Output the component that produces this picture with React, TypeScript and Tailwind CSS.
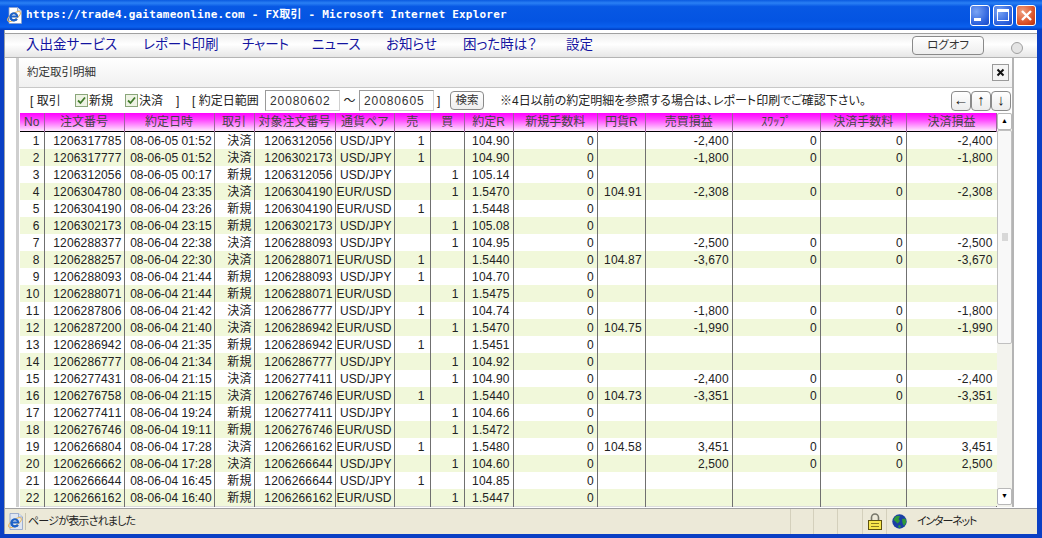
const sans = 'font-["Liberation_Sans","Noto_Sans_CJK_JP",sans-serif]';

type Row = [string, string, string, string, string, string, string, string, string, string, string, string, string];

// order, date, kind, target, pair, sell, buy, rate, yen rate, p/l, swap, fee, total
const rows: Row[] = [
  ['1206317785', '08-06-05 01:52', '決済', '1206312056', 'USD/JPY', '1', '', '104.90', '', '-2,400', '0', '0', '-2,400'],
  ['1206317777', '08-06-05 01:52', '決済', '1206302173', 'USD/JPY', '1', '', '104.90', '', '-1,800', '0', '0', '-1,800'],
  ['1206312056', '08-06-05 00:17', '新規', '1206312056', 'USD/JPY', '', '1', '105.14', '', '', '', '', ''],
  ['1206304780', '08-06-04 23:35', '決済', '1206304190', 'EUR/USD', '', '1', '1.5470', '104.91', '-2,308', '0', '0', '-2,308'],
  ['1206304190', '08-06-04 23:26', '新規', '1206304190', 'EUR/USD', '1', '', '1.5448', '', '', '', '', ''],
  ['1206302173', '08-06-04 23:15', '新規', '1206302173', 'USD/JPY', '', '1', '105.08', '', '', '', '', ''],
  ['1206288377', '08-06-04 22:38', '決済', '1206288093', 'USD/JPY', '', '1', '104.95', '', '-2,500', '0', '0', '-2,500'],
  ['1206288257', '08-06-04 22:30', '決済', '1206288071', 'EUR/USD', '1', '', '1.5440', '104.87', '-3,670', '0', '0', '-3,670'],
  ['1206288093', '08-06-04 21:44', '新規', '1206288093', 'USD/JPY', '1', '', '104.70', '', '', '', '', ''],
  ['1206288071', '08-06-04 21:44', '新規', '1206288071', 'EUR/USD', '', '1', '1.5475', '', '', '', '', ''],
  ['1206287806', '08-06-04 21:42', '決済', '1206286777', 'USD/JPY', '1', '', '104.74', '', '-1,800', '0', '0', '-1,800'],
  ['1206287200', '08-06-04 21:40', '決済', '1206286942', 'EUR/USD', '', '1', '1.5470', '104.75', '-1,990', '0', '0', '-1,990'],
  ['1206286942', '08-06-04 21:35', '新規', '1206286942', 'EUR/USD', '1', '', '1.5451', '', '', '', '', ''],
  ['1206286777', '08-06-04 21:34', '新規', '1206286777', 'USD/JPY', '', '1', '104.92', '', '', '', '', ''],
  ['1206277431', '08-06-04 21:15', '決済', '1206277411', 'USD/JPY', '', '1', '104.90', '', '-2,400', '0', '0', '-2,400'],
  ['1206276758', '08-06-04 21:15', '決済', '1206276746', 'EUR/USD', '1', '', '1.5440', '104.73', '-3,351', '0', '0', '-3,351'],
  ['1206277411', '08-06-04 19:24', '新規', '1206277411', 'USD/JPY', '', '1', '104.66', '', '', '', '', ''],
  ['1206276746', '08-06-04 19:11', '新規', '1206276746', 'EUR/USD', '', '1', '1.5472', '', '', '', '', ''],
  ['1206266804', '08-06-04 17:28', '決済', '1206266162', 'EUR/USD', '1', '', '1.5480', '104.58', '3,451', '0', '0', '3,451'],
  ['1206266662', '08-06-04 17:28', '決済', '1206266644', 'USD/JPY', '', '1', '104.60', '', '2,500', '0', '0', '2,500'],
  ['1206266644', '08-06-04 16:45', '新規', '1206266644', 'USD/JPY', '1', '', '104.85', '', '', '', '', ''],
  ['1206266162', '08-06-04 16:40', '新規', '1206266162', 'EUR/USD', '', '1', '1.5447', '', '', '', '', ''],
];

const columns = [
  { label: 'No', width: 'w-[24px]' },
  { label: '注文番号', width: 'w-[80px]' },
  { label: '約定日時', width: 'w-[90px]' },
  { label: '取引', width: 'w-[40px]' },
  { label: '対象注文番号', width: 'w-[81px]' },
  { label: '通貨ペア', width: 'w-[59px]' },
  { label: '売', width: 'w-[36px]' },
  { label: '買', width: 'w-[34px]' },
  { label: '約定R', width: 'w-[49px]' },
  { label: '新規手数料', width: 'w-[84px]' },
  { label: '円貨R', width: 'w-[48px]' },
  { label: '売買損益', width: 'w-[87px]' },
  { label: 'ｽﾜｯﾌﾟ', width: 'w-[88px]' },
  { label: '決済手数料', width: 'w-[86px]' },
  { label: '決済損益', width: 'w-[90px]' },
];

const PageIcon = ({ page = '#ffffff' }: { page?: string }) => (
  <svg width="17" height="17" viewBox="0 0 17 17" className="shrink-0">
    <path d="M3 .5h8.500L15.500 4v12.500H3Z" fill={page} stroke="#8aa0c8" strokeWidth=".8" />
    <path d="M11.500.5V4h4" fill="#d8e4f4" stroke="#8aa0c8" strokeWidth=".8" />
    <ellipse cx="8" cy="9.500" rx="7.500" ry="2.800" fill="none" stroke="#e8b860" strokeWidth="1" transform="rotate(-35 8 9.500)" />
    <path d="M4.800 9.600h6.900a3.500 3.500 0 1 0-1 2.700" fill="none" stroke="#1d62c8" strokeWidth="2" transform="translate(-.4 0)" />
    <path d="M4.600 9.500c-.3 2.800 2 4.300 4.200 3.800 1-.2 1.800-.8 2.300-1.400" fill="none" stroke="#1d62c8" strokeWidth="2" />
  </svg>
);

const Lock = () => (
  <svg width="14" height="17" viewBox="0 0 14 17">
    <path d="M3.500 8V4.500a3.500 3.500 0 0 1 7 0V8" fill="none" stroke="#77776a" strokeWidth="1.600" />
    <rect x=".5" y="7.500" width="13" height="9" fill="#f7e64c" stroke="#5e5210" />
    <path d="M3 10.500h8M3 13.500h8" stroke="#8a7a20" />
  </svg>
);

const Globe = () => (
  <svg width="15" height="15" viewBox="0 0 15 15">
    <circle cx="7.500" cy="7.500" r="7.200" fill="#1a3fa4" />
    <path d="M3 3c2-1.500 4-1.500 5-.5L6.500 5 8 7 5.500 9.500 3 7 1.500 6ZM10 5l3.500-.5.800 4-2.300 3.500L10.500 9Z" fill="#2f9a3a" />
    <path d="M6 12l2-1 1 2-2 1Z" fill="#2f9a3a" />
  </svg>
);

const XpCheck = ({ label }: { label: string }) => (
  <span className="flex items-center gap-[1px]">
    <span className="flex h-[13px] w-[13px] items-center justify-center border border-[#8aa67a] bg-[#eef3e4]">
      <svg width="9" height="9" viewBox="0 0 9 9">
        <path d="M1 4.500 3.500 7 8 1.500" fill="none" stroke="#3f7a2a" strokeWidth="1.800" />
      </svg>
    </span>
    <span>{label}</span>
  </span>
);

const DateBox = ({ value }: { value: string }) => (
  <span className="flex h-[21px] w-[75px] items-center border border-[#9a9a9a] border-r-[#d0d0d0] border-b-[#d0d0d0] bg-white pl-[4px] tracking-[0.900px] text-[#333]">
    {value}
  </span>
);

const ArrowButton = ({ glyph }: { glyph: string }) => (
  <span className="flex h-[20px] w-[20px] items-center justify-center rounded-[4px] border border-[#8a8a8a] bg-[linear-gradient(#ffffff,#ececec)] text-[15px] text-[#222]">
    {glyph}
  </span>
);

const WindowButton = ({ kind }: { kind: 'min' | 'max' | 'close' }) => {
  if (kind === 'close') {
    return (
      <span className="flex h-[21px] w-[20px] items-center justify-center rounded-[3px] border border-white bg-[radial-gradient(circle_at_30%_30%,#f0a080,#d84a20_70%,#b03010)]">
        <svg width="13" height="13" viewBox="0 0 13 13">
          <path d="M2 2l9 9M11 2l-9 9" stroke="#fff" strokeWidth="2.400" />
        </svg>
      </span>
    );
  }
  return (
    <span className="flex h-[21px] w-[20px] items-center justify-center rounded-[3px] border border-white bg-[radial-gradient(circle_at_30%_30%,#7aa4f4,#2a5fdc_70%,#1c48c0)]">
      {kind === 'min' ? (
        <span className="mt-[9px] mr-[5px] h-[3px] w-[7px] bg-white" />
      ) : (
        <span className="h-[12px] w-[12px] border border-t-[3px] border-white" />
      )}
    </span>
  );
};

const navItems = [
  { label: '入出金サービス', width: 'w-[117px]' },
  { label: 'レポート印刷', width: 'w-[99px]' },
  { label: 'チャート', width: 'w-[70px]' },
  { label: 'ニュース', width: 'w-[74px]' },
  { label: 'お知らせ', width: 'w-[77px]' },
  { label: '困った時は？', width: 'w-[103px]' },
  { label: '設定', width: 'w-[40px]' },
];

const cellBase = 'overflow-hidden border-r border-[#707070] p-0 pt-[1px] whitespace-nowrap text-right';

export default function App() {
  return (
    <div className={`${sans} flex h-[538px] w-[1042px] flex-col overflow-hidden bg-[#0a3fc4] text-[12px] text-[#222] [font-feature-settings:"palt"]`}>
      {/* Title bar */}
      <div className="flex h-[30px] shrink-0 items-center bg-[linear-gradient(#0a5ae0_0%,#2a80f4_10%,#0758e4_22%,#0454e2_70%,#0a60ee_90%,#003cc0_100%)] pr-[6px] pl-[6px]">
        <PageIcon />
        <span className='ml-[3px] font-["DejaVu_Sans_Mono","Noto_Sans_CJK_JP",monospace] text-[11px] font-bold tracking-[0.220px] whitespace-pre text-white [font-feature-settings:normal]'>
          https://trade4.gaitameonline.com - FX取引 - Microsoft Internet Explorer
        </span>
        <span className="ml-auto flex gap-[3px]">
          <WindowButton kind="min" />
          <WindowButton kind="max" />
          <WindowButton kind="close" />
        </span>
      </div>

      {/* Window body */}
      <div className="mr-[5px] ml-[4px] flex min-h-0 flex-1 flex-col border-l border-[#9aa0a8] bg-white">
        <div className="h-[4px] shrink-0 border-b border-[#a0a0a0] bg-white" />

        {/* Menu */}
        <div className="flex h-[24px] shrink-0 items-center border-b border-[#b4b4b4] bg-[linear-gradient(#eeeeee,#ffffff_45%,#e6e6e6)] pl-[21px] text-[13.500px] text-[#1414a0]">
          {navItems.map((item) => (
            <span key={item.label} className={`${item.width} shrink-0`}>
              {item.label}
            </span>
          ))}
          <span className="ml-[306px] flex h-[19px] w-[72px] items-center justify-center rounded-[4px] border border-[#8a8a8a] bg-[linear-gradient(#ffffff,#eeeeee)] text-[11.500px] text-[#333]">
            ログオフ
          </span>
          <span className="mt-[4px] ml-[27px] h-[12px] w-[12px] rounded-full border border-[#a0a0a0] bg-[#e4e4e4]" />
        </div>

        {/* Panel */}
        <div className="ml-[11px] flex min-h-0 w-[998px] flex-1 flex-col border-r-[2px] border-l-[3px] border-r-[#b4b4b4] border-l-[#cfcfcf] bg-white">
          <div className="flex h-[30px] shrink-0 items-center justify-between border-b border-[#c8c8c8] bg-[linear-gradient(#ffffff,#f0f0f0)] pr-[3px] pl-[8px] text-[11.500px] text-[#333]">
            <span>約定取引明細</span>
            <span className="flex h-[17px] w-[17px] items-center justify-center border border-[#9a9a9a] bg-[#f4f4f4]">
              <svg width="9" height="9" viewBox="0 0 9 9">
                <path d="M1.500 1.500l6 6M7.500 1.500l-6 6" stroke="#111" strokeWidth="2" />
              </svg>
            </span>
          </div>

          {/* Filter row */}
          <div className="flex h-[25px] shrink-0 items-center pl-[11px] text-[#222]">
            <span className="w-[45px] whitespace-pre">[ 取引</span>
            <span className="w-[50px]"><XpCheck label="新規" /></span>
            <span className="w-[51px]"><XpCheck label="決済" /></span>
            <span className="w-[16px]">]</span>
            <span className="w-[73px] whitespace-pre">[ 約定日範囲</span>
            <DateBox value="20080602" />
            <span className="w-[19px] text-center">～</span>
            <DateBox value="20080605" />
            <span className="ml-[3px] w-[13px]">]</span>
            <span className="flex h-[19px] w-[34px] items-center justify-center rounded-[4px] border border-[#8a8a8a] bg-[linear-gradient(#ffffff,#eeeeee)] text-[11.500px] text-[#333]">
              検索
            </span>
            <span className="ml-[16px] w-[370px] whitespace-nowrap">※4日以前の約定明細を参照する場合は、レポート印刷でご確認下さい。</span>
            <span className="ml-[81px] flex">
              <ArrowButton glyph="←" />
              <ArrowButton glyph="↑" />
              <ArrowButton glyph="↓" />
            </span>
          </div>

          {/* Trades table and its scrollbar */}
          <div className="flex min-h-0 flex-1 pl-[1px]">
            <table className="h-fit w-[977px] table-fixed border-collapse [font-kerning:none]">
              <thead>
                <tr className="h-[17px] border-b border-black bg-[linear-gradient(#ff00ff,#ff40ff_35%,#ffe8ff)]">
                  {columns.map((col) => (
                    <th key={col.label} className={`${col.width} border-r border-[#a060a0] p-0 text-center text-[12px] font-normal whitespace-nowrap text-[#444]`}>
                      {col.label}
                    </th>
                  ))}
                </tr>
              </thead>
              <tbody>
                {rows.map((row, i) => (
                  <tr key={row[0]} className={`h-[17px] text-[12px] leading-[16px] tracking-[0.150px] ${i % 2 === 1 ? 'bg-[#f1f8da]' : 'bg-white'}`}>
                    <td className={`${cellBase} pr-[4px]`}>{i + 1}</td>
                    <td className={`${cellBase} pr-[2px]`}>{row[0]}</td>
                    <td className={`${cellBase} pr-[2px] tracking-normal`}>{row[1]}</td>
                    <td className={`${cellBase} pr-[2px]`}>{row[2]}</td>
                    <td className={`${cellBase} pr-[2px]`}>{row[3]}</td>
                    <td className={`${cellBase} pr-[2px]`}>{row[4]}</td>
                    <td className={`${cellBase} pr-[5px]`}>{row[5]}</td>
                    <td className={`${cellBase} pr-[5px]`}>{row[6]}</td>
                    <td className={`${cellBase} pr-[3px]`}>{row[7]}</td>
                    <td className={`${cellBase} pr-[3px]`}>0</td>
                    <td className={`${cellBase} pr-[3px]`}>{row[8]}</td>
                    <td className={`${cellBase} pr-[3px]`}>{row[9]}</td>
                    <td className={`${cellBase} pr-[3px]`}>{row[10]}</td>
                    <td className={`${cellBase} pr-[3px]`}>{row[11]}</td>
                    <td className="overflow-hidden p-0 pt-[1px] pr-[4px] text-right whitespace-nowrap">{row[12]}</td>
                  </tr>
                ))}
                <tr className="h-[2px] bg-[#dcdcdc]">
                  {columns.map((col) => (
                    <td key={col.label} className="border-r border-[#707070] p-0" />
                  ))}
                </tr>
              </tbody>
            </table>
            <div className="flex w-[15px] shrink-0 flex-col bg-[#f3f3ee]">
              <span className="flex h-[17px] items-center justify-center rounded-[2px] border border-[#b8b8b8] bg-white text-[7px] text-black">▲</span>
              <span className="flex h-[214px] items-center justify-center rounded-[2px] border border-[#c0c0c0] bg-[#f8f8f8]">
                <span className="h-[8px] w-[6px] bg-[#d8d8d8]" />
              </span>
              <span className="mt-auto mb-[2px] flex h-[17px] items-center justify-center rounded-[2px] border border-[#b8b8b8] bg-white text-[7px] text-black">▼</span>
            </div>
          </div>
        </div>
        <div className="h-[2px] shrink-0 border-b border-[#a0a0a0] bg-white" />

        {/* Status bar */}
        <div className="flex h-[25px] shrink-0 items-center bg-[#ece9d8] pl-[2px] text-[11px] text-[#222]">
          <PageIcon page="#dfe6f2" />
          <span className="ml-[1px] border-l border-[#c8c4b0] pl-[2px] tracking-[-0.800px]">ページが表示されました</span>
          <span className="ml-auto flex h-full items-center">
            <span className="h-full w-[23px] border-l border-[#d4d0bc]" />
            <span className="h-full w-[24px] border-l border-[#d4d0bc]" />
            <span className="h-full w-[25px] border-l border-[#d4d0bc]" />
            <span className="flex h-full w-[24px] items-center justify-center border-l border-[#d4d0bc]"><Lock /></span>
            <span className="flex h-full w-[151px] items-center gap-[10px] border-l border-[#d4d0bc] pl-[5px]">
              <Globe />
              <span className="tracking-[-1.200px]">インターネット</span>
            </span>
          </span>
        </div>
      </div>
      <div className="h-[4px] shrink-0 bg-[#0a3fc4]" />
    </div>
  );
}
